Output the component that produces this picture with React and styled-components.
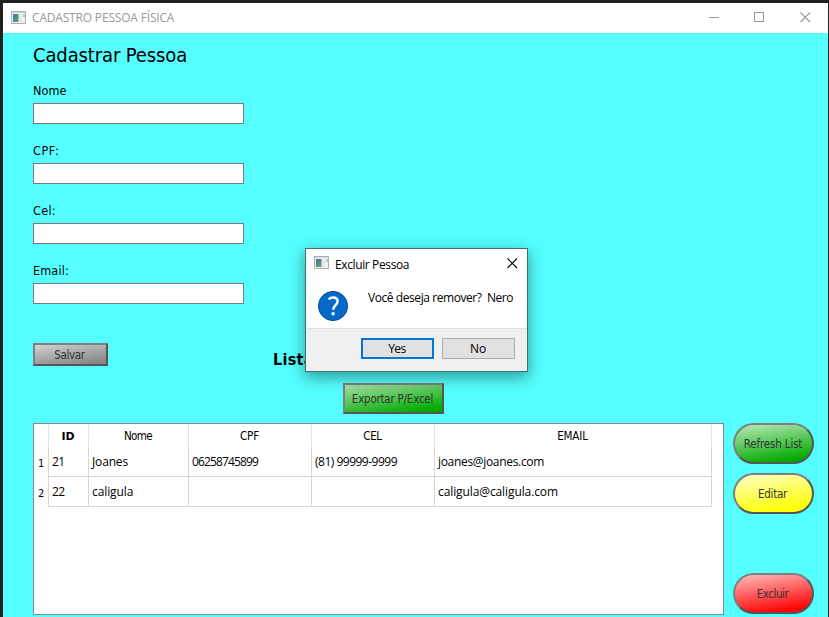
import React from "react";
import styled, { createGlobalStyle } from "styled-components";

const tahoma = `"DejaVu Sans Condensed", "DejaVu Sans", sans-serif`;
const segoe = `"Open Sans", "Noto Sans", sans-serif`;

const GlobalStyle = createGlobalStyle`
  * { box-sizing: border-box; }
  body { margin: 0; overflow: hidden; }
  button { padding: 0; margin: 0; }
`;

const Desktop = styled.div`
  width: 829px;
  height: 617px;
  padding: 3px 1px 0 3px;
  background: #231f20;
  overflow: hidden;
  position: relative;
`;

const Window = styled.main`
  height: 614px;
  display: flex;
  flex-direction: column;
  background: #55ffff;
`;

const TitleBar = styled.header`
  height: 30px;
  flex: none;
  display: flex;
  align-items: center;
  padding: 0 17px 1px 8px;
  background: #fff;
`;

const WindowTitle = styled.span`
  font: 12px/16px ${segoe};
  letter-spacing: -0.18px;
  margin-left: 5px;
  flex: 1;
  color: #999;
  white-space: nowrap;
`;

const WindowControls = styled.div`
  display: flex;
  gap: 35px;
  svg { display: block; }
`;

const Content = styled.div`
  flex: 1;
  min-height: 0;
  padding: 0 14px 2px 30px;
  display: flex;
  flex-direction: column;
`;

const Heading = styled.h1`
  margin: 9px 0 0;
  height: 26px;
  font: 20px/26px ${tahoma};
  letter-spacing: -0.12px;
  color: #000;
`;

const Form = styled.form`
  margin-top: 13px;
  display: flex;
  flex-direction: column;
  gap: 17px;
`;

const Field = styled.label`
  display: flex;
  flex-direction: column;
  height: 43px;
  padding-top: 2px;
  justify-content: space-between;
  font: 12.5px/16px ${tahoma};
  letter-spacing: ${(p) => p.$spacing}px;
  color: #000;
`;

const Input = styled.input`
  width: 211px;
  height: 21px;
  border: 1px solid #7a7a7a;
  background: #fff;
  outline: none;
`;

const ActionBar = styled.div`
  height: 119px;
  flex: none;
  display: grid;
  grid-template-columns: 240px 1fr;
  grid-template-rows: 40px 31px;
  align-items: start;
  padding-top: 39px;
`;

const ListTitle = styled.h2`
  margin: 7px 0 0;
  font: bold 16px/20px ${tahoma};
  letter-spacing: 0.3px;
  color: #000;
`;

const ActionButton = styled.button`
  width: ${(p) => p.$w}px;
  height: ${(p) => p.$h}px;
  border: 2px solid;
  border-color: #7f7f7f #555 #555 #7f7f7f;
  border-radius: ${(p) => (p.$round ? 21 : 0)}px;
  background: linear-gradient(171deg, ${(p) => p.$from} 0%, ${(p) => p.$to} 86%) border-box;
  font: 11.5px/14px ${tahoma};
  letter-spacing: ${(p) => p.$spacing || 0}px;
  padding: 1px ${(p) => p.$shift || 0}px 0 0;
  color: #333;
  white-space: nowrap;
`;

const ExportButton = styled(ActionButton)`
  grid-column: 2;
  margin: 0 0 0 70px;
`;

const ListArea = styled.section`
  display: flex;
  justify-content: space-between;
  height: 192px;
`;

const TableFrame = styled.div`
  width: 691px;
  border: 1px solid #828790;
  background: #fff;
`;

const Row = styled.div`
  display: grid;
  grid-template-columns: 15px 40px 100px 123px 123px 277px;
  height: ${(p) => (p.$header ? 23 : 30)}px;
`;

const HeadCell = styled.div`
  border-right: 1px solid #e5e5e5;
  display: flex;
  align-items: center;
  justify-content: center;
  padding: 1px 1px 0 0;
  font: 11.5px/14px ${tahoma};
  letter-spacing: ${(p) => p.$spacing || 0}px;
  color: #000;
`;

const IdHeadCell = styled(HeadCell)`
  padding-top: 2px;
  font: bold 11px/14px "DejaVu Sans", sans-serif;
`;

const RowNumber = styled.div`
  border-right: 1px solid #d8d8d8;
  padding: 10px 0 0 4px;
  font: 11px/14px ${tahoma};
  color: #000;
`;

const Cell = styled.div`
  border-right: 1px solid #d8d8d8;
  border-bottom: 1px solid #d8d8d8;
  padding: 1px 0 0 3px;
  display: flex;
  align-items: center;
  font: 12px/16px ${segoe};
  letter-spacing: ${(p) => p.$spacing || 0}px;
  color: #000;
  white-space: nowrap;
`;

const SideActions = styled.nav`
  display: flex;
  flex-direction: column;
  gap: 9px;
  button:last-child { margin-top: 50px; }
`;

const Dialog = styled.section`
  position: absolute;
  left: 305px;
  top: 248px;
  width: 223px;
  height: 124px;
  border: 1px solid #3c7276;
  background: #fff;
  box-shadow: 0 5px 14px 1px rgba(0, 30, 30, 0.42);
  display: flex;
  flex-direction: column;
`;

const DialogTitle = styled.header`
  display: flex;
  align-items: center;
  height: 29px;
  padding: 0 9px 1px 8px;
  font: 12px/16px ${segoe};
  letter-spacing: -0.38px;
  color: #000;
  span { margin-left: 5px; flex: 1; padding-top: 3px; }
`;

const DialogBody = styled.div`
  flex: 1;
  display: flex;
  padding: 12px 0 0 11px;
  font: 12px/16px ${segoe};
  letter-spacing: -0.43px;
  color: #000;
  white-space: pre;
  p { margin: 0 0 0 19px; }
`;

const DialogFooter = styled.footer`
  height: 43px;
  border-top: 1px solid #dfdfdf;
  background: #f0f0f0;
  display: flex;
  justify-content: flex-end;
  gap: 8px;
  padding: 9px 12px 0 0;
`;

const DialogButton = styled.button`
  width: 73px;
  height: 21px;
  border: ${(p) => (p.$primary ? "2px solid #0078d7" : "1px solid #adadad")};
  background: #e1e1e1;
  font: 12px/16px ${segoe};
  letter-spacing: ${(p) => (p.$primary ? -0.5 : -0.2)}px;
  padding-right: 1px;
  color: #000;
`;

function AppIcon() {
  return (
    <svg width="16" height="14" viewBox="0 0 16 14">
      <defs>
        <linearGradient id="pane" x1="0" y1="0" x2="1" y2="1">
          <stop offset="0" stopColor="#46749c" />
          <stop offset="1" stopColor="#5aa573" />
        </linearGradient>
      </defs>
      <rect x="0.5" y="0.5" width="14" height="12" fill="#f1f1f1" stroke="#adafb0" />
      <rect x="1" y="1" width="13" height="1" fill="#d3d6d8" />
      <rect x="2" y="3" width="5.5" height="8" fill="url(#pane)" />
      <rect x="8" y="3" width="3" height="8" fill="#e4e8ea" />
      <rect x="12" y="3" width="2" height="3" fill="#b9c6d8" />
    </svg>
  );
}

function QuestionIcon() {
  return (
    <svg width="32" height="32" viewBox="0 0 32 32">
      <circle cx="16" cy="16" r="14.6" fill="#0669c9" stroke="#08478a" strokeWidth="1" />
      <path d="M11.6 9.3C13 8 14.6 7.5 16.2 7.5C19 7.5 20.6 9 20.6 11.3C20.6 15 16.2 15.4 16.2 19.8" fill="none" stroke="#fff" strokeWidth="2.4" />
      <circle cx="16.1" cy="23.7" r="1.7" fill="#fff" />
    </svg>
  );
}

function CloseIcon({ color }) {
  return (
    <svg width="11" height="11" viewBox="0 0 11 11">
      <path d="M.5 .5L10 10M10 .5L.5 10" stroke={color} strokeWidth="1.1" />
    </svg>
  );
}

const fields = [
  ["Nome", 0.1],
  ["CPF:", 0.6],
  ["Cel:", 0.3],
  ["Email:", 0.15],
];

const rows = [
  [["21", -0.7], ["Joanes", -0.15], ["06258745899", -0.85], ["(81) 99999-9999", -0.5], ["joanes@joanes.com", -0.32]],
  [["22", -0.7], ["caligula", -0.1], ["", 0], ["", 0], ["caligula@caligula.com", -0.1]],
];

export default function App() {
  return (
    <Desktop>
      <GlobalStyle />
      <Window>
        <TitleBar>
          <AppIcon />
          <WindowTitle>CADASTRO PESSOA FÍSICA</WindowTitle>
          <WindowControls>
            <svg width="11" height="11"><path d="M1 5.5H11" stroke="#999" /></svg>
            <svg width="11" height="11"><rect x=".5" y=".5" width="9" height="9" fill="none" stroke="#999" /></svg>
            <CloseIcon color="#999" />
          </WindowControls>
        </TitleBar>
        <Content>
          <Heading>Cadastrar Pessoa</Heading>
          <Form>
            {fields.map(([name, spacing]) => (
              <Field key={name} $spacing={spacing}>
                {name}
                <Input />
              </Field>
            ))}
          </Form>
          <ActionBar>
            <ActionButton $w={75} $h={23} $from="#d8d8d8" $to="#858585" $spacing={-0.35} $shift={2}>Salvar</ActionButton>
            <ListTitle>Lista</ListTitle>
            <ExportButton $w={101} $h={31} $from="#b4e4b4" $to="#00aa00" $spacing={-0.22} $shift={2}>Exportar P/Excel</ExportButton>
          </ActionBar>
          <ListArea>
            <TableFrame>
              <Row $header>
                <HeadCell />
                <IdHeadCell>ID</IdHeadCell>
                <HeadCell $spacing={-0.6}>Nome</HeadCell>
                <HeadCell $spacing={-0.1}>CPF</HeadCell>
                <HeadCell $spacing={-0.4}>CEL</HeadCell>
                <HeadCell $spacing={-0.15}>EMAIL</HeadCell>
              </Row>
              {rows.map((cells, i) => (
                <Row key={i}>
                  <RowNumber>{i + 1}</RowNumber>
                  {cells.map(([text, spacing], j) => (
                    <Cell key={j} $spacing={spacing}>{text}</Cell>
                  ))}
                </Row>
              ))}
            </TableFrame>
            <SideActions>
              <ActionButton $round $w={81} $h={41} $from="#c4ecc4" $to="#00aa00" $spacing={-0.15} $shift={1}>Refresh List</ActionButton>
              <ActionButton $round $w={81} $h={41} $from="#ffffd0" $to="#ffff00" $spacing={-0.25} $shift={2}>Editar</ActionButton>
              <ActionButton $round $w={81} $h={41} $from="#ffc8c8" $to="#ff0000" $spacing={-0.45} $shift={2}>Excluir</ActionButton>
            </SideActions>
          </ListArea>
        </Content>
      </Window>
      <Dialog role="dialog">
        <DialogTitle>
          <AppIcon />
          <span>Excluir Pessoa</span>
          <CloseIcon color="#000" />
        </DialogTitle>
        <DialogBody>
          <QuestionIcon />
          <p>{"Você deseja remover?  Nero"}</p>
        </DialogBody>
        <DialogFooter>
          <DialogButton $primary>Yes</DialogButton>
          <DialogButton>No</DialogButton>
        </DialogFooter>
      </Dialog>
    </Desktop>
  );
}
